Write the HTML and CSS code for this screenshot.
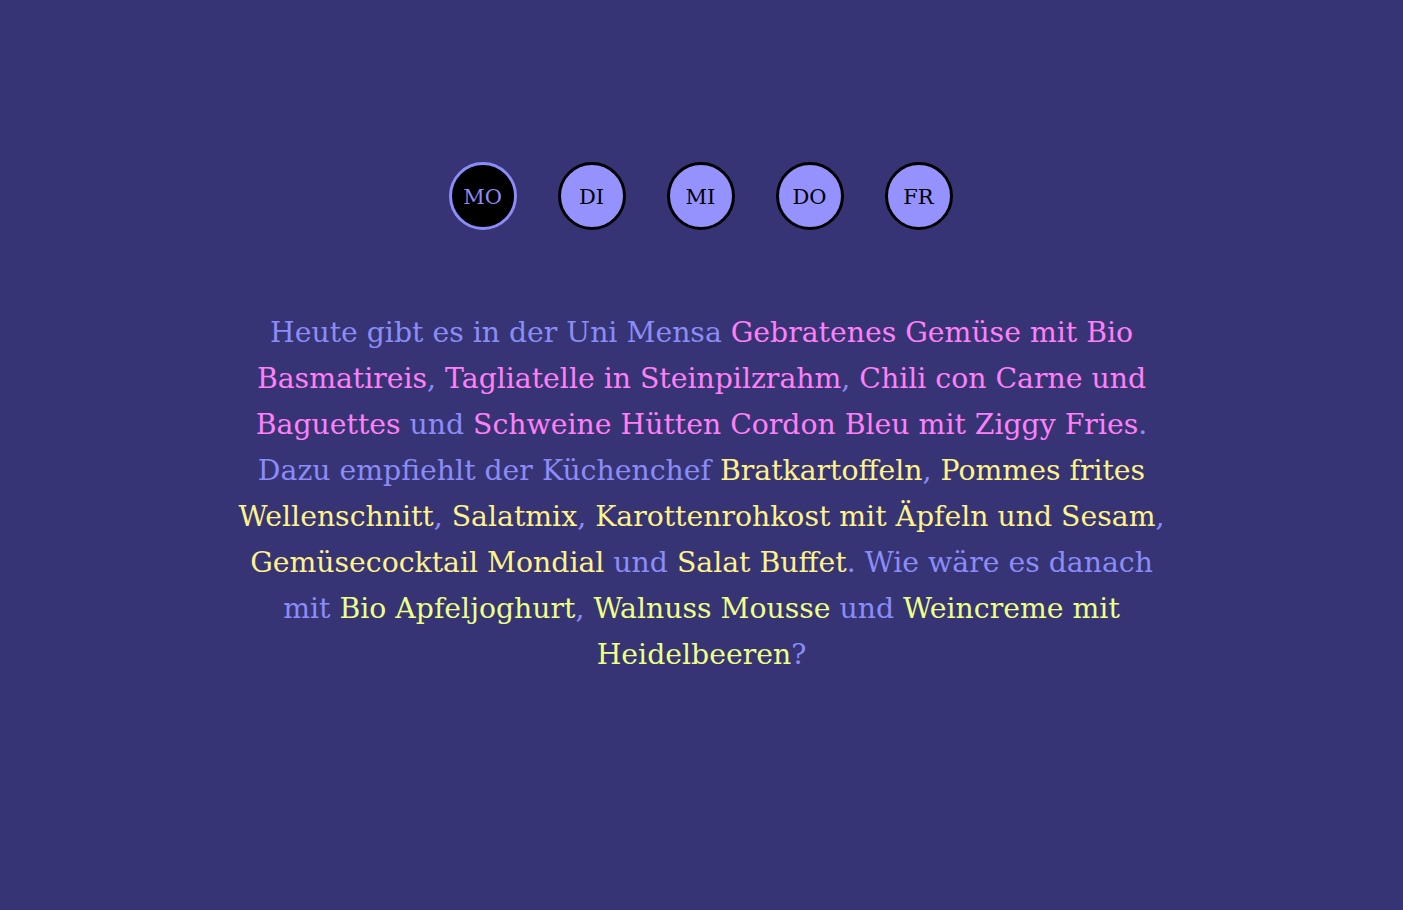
FILE: index.html
```html
<!DOCTYPE html>
<html lang="de">
<head>
<meta charset="utf-8">
<title>Mensa</title>
<link rel="stylesheet" href="styles.css">
</head>
<body>
<main class="page">
  <nav class="days">
    <button class="day active">MO</button>
    <button class="day">DI</button>
    <button class="day">MI</button>
    <button class="day">DO</button>
    <button class="day">FR</button>
  </nav>
  <p class="menu">Heute gibt es in der Uni Mensa <span class="main">Gebratenes Gemüse mit Bio Basmatireis</span>, <span class="main">Tagliatelle in Steinpilzrahm</span>, <span class="main">Chili con Carne und Baguettes</span> und <span class="main">Schweine Hütten Cordon Bleu mit Ziggy Fries</span>. Dazu empfiehlt der Küchenchef <span class="side">Bratkartoffeln</span>, <span class="side">Pommes frites Wellenschnitt</span>, <span class="side">Salatmix</span>, <span class="side">Karottenrohkost mit Äpfeln und Sesam</span>, <span class="side">Gemüsecocktail Mondial</span> und <span class="side">Salat Buffet</span>. Wie wäre es danach mit <span class="dessert">Bio Apfeljoghurt</span>, <span class="dessert">Walnuss Mousse</span> und <span class="dessert">Weincreme mit Heidelbeeren</span>?</p>
</main>
</body>
</html>
```
FILE: styles.css
```css
html, body {
  margin: 0;
  padding: 0;
  background: #363474;
  min-height: 100%;
}
body {
  font-family: "DejaVu Serif", "Liberation Serif", serif;
}
.page {
  display: flex;
  flex-direction: column;
  align-items: center;
  padding-top: 162px;
}
.days {
  display: flex;
  gap: 41px;
  margin-right: 2px;
}
.day {
  box-sizing: border-box;
  width: 68px;
  height: 68px;
  border-radius: 50%;
  border: 3px solid #000;
  background: #9591fd;
  color: #000;
  font-family: "DejaVu Serif", "Liberation Serif", serif;
  font-size: 21px;
  padding: 2px 0 0;
  display: flex;
  align-items: center;
  justify-content: center;
  cursor: pointer;
}
.day.active {
  background: #000;
  color: #8b8cf8;
  border-color: #8b8cf8;
}
.menu {
  width: 945px;
  margin: 80px 0 0;
  text-align: center;
  font-size: 28.3px;
  line-height: 46px;
  color: #8b8cf8;
}
.main { color: #ff80f6; }
.side { color: #fff28a; }
.dessert { color: #eeff88; }
```
